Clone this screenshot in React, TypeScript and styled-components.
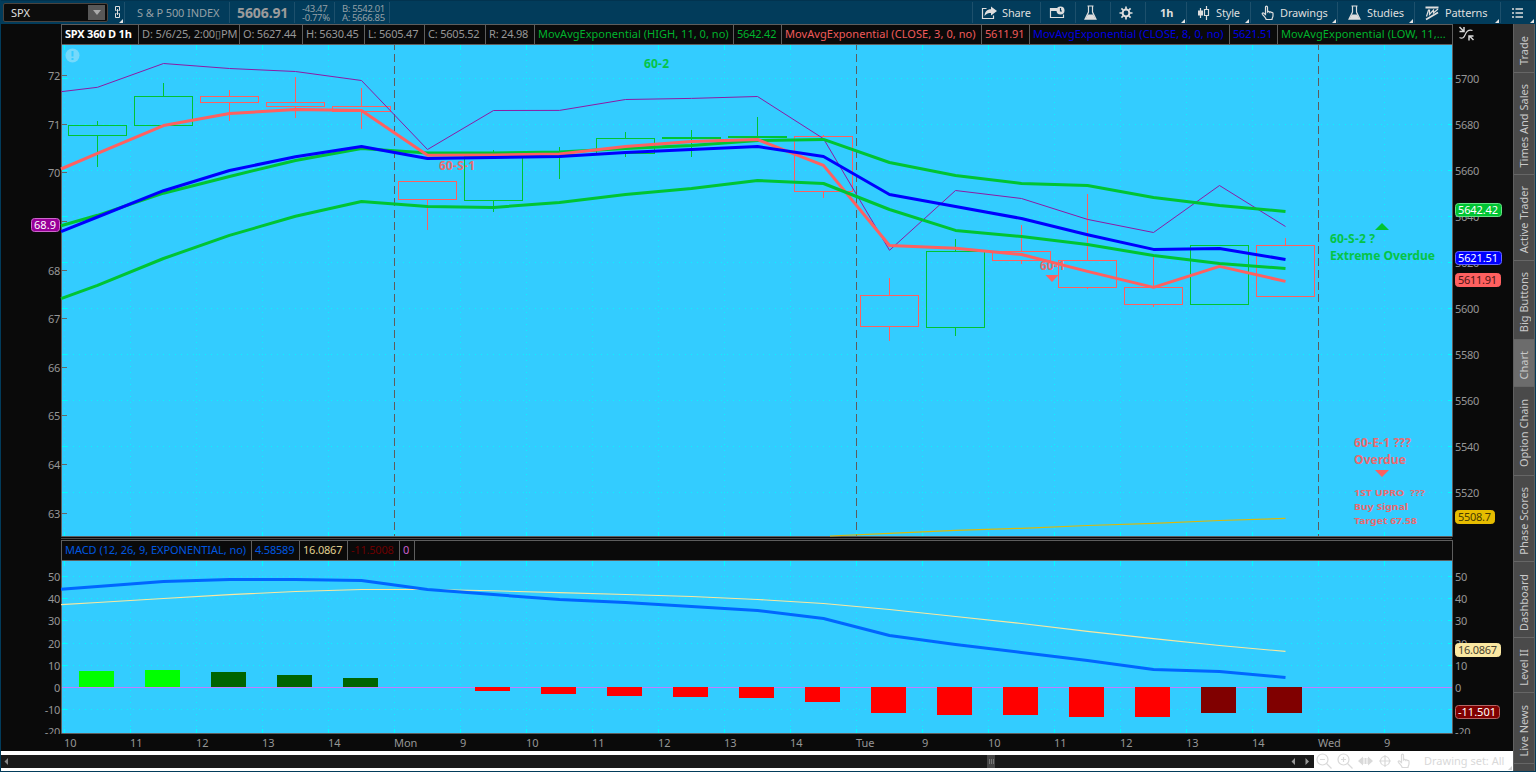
import type { ReactNode } from 'react';
import styled, { createGlobalStyle, css } from 'styled-components';

const GlobalStyle = createGlobalStyle`
  * {
    box-sizing: border-box;
  }
  body {
    margin: 0;
    overflow: hidden;
    background: #023c5b;
    font-family: 'Noto Sans', 'Open Sans', sans-serif;
    font-size: 11px;
  }
`;

const colors = {
  up: '#00c432',
  down: '#ff6060',
  blue: '#0000ff',
  purple: '#8c1ba5',
  grid: '#00ffff',
  plot: '#33ccff',
  frame: '#5e5e5e',
  label: '#969696',
  macd: '#0066ff',
  signal: '#f8e8a0',
};

/* ---------- layout ---------- */

const Window = styled.div`
  width: 1536px;
  height: 772px;
  display: flex;
  flex-direction: column;
  padding: 0 1px 1px;
  background: #023c5b;
  overflow: hidden;
`;

const Toolbar = styled.header`
  display: flex;
  flex: none;
  height: 24px;
  padding: 1px 0 1px 2px;
  border-top: 1px solid #02334f;
  color: #dedede;
`;

const SymbolBox = styled.div`
  display: flex;
  align-items: center;
  justify-content: space-between;
  width: 105px;
  height: 19px;
  margin-top: 1px;
  padding: 0 2px 0 7px;
  border: 1px solid #49433f;
  border-radius: 2px;
  background: #0c0c0c;
  color: #e0e0e0;
`;

const DropButton = styled.span`
  display: grid;
  place-items: center;
  width: 17px;
  height: 15px;
  background: #585858;
`;

const corner = css`
  position: relative;
  &::after {
    content: '';
    position: absolute;
    right: 1px;
    bottom: 0;
    border-left: 4px solid transparent;
    border-bottom: 4px solid #e4e4e4;
  }
`;

const LinkButton = styled.div`
  display: flex;
  width: 16px;
  padding: 3px 0 0 6px;
  ${corner}
`;

const QuoteCell = styled.div<{ $w: number }>`
  display: flex;
  flex-direction: column;
  justify-content: center;
  width: ${(p) => p.$w}px;
  padding-left: 7px;
  border-left: 1px solid #1d506c;
  color: #94a0a6;
  white-space: nowrap;
`;

const IndexName = styled.span`
  padding-left: 5px;
  letter-spacing: -0.1px;
`;

const LastPrice = styled.strong`
  font-size: 14px;
  line-height: 18px;
  letter-spacing: -0.1px;
  color: #9b9b9b;
`;

const SmallQuote = styled.span`
  font-size: 9.5px;
  line-height: 9px;
  letter-spacing: -0.35px;
`;

const Tools = styled.nav`
  display: flex;
  margin-left: auto;
`;

const Tool = styled.div<{ $w: number; $menu?: boolean }>`
  display: flex;
  align-items: center;
  gap: ${(p) => (p.$menu ? 6 : 5)}px;
  width: ${(p) => p.$w}px;
  padding-left: ${(p) => (p.$menu ? 10 : 8)}px;
  border-left: 1px solid #1d506c;
  white-space: nowrap;
  letter-spacing: -0.15px;
  ${(p) => p.$menu && corner}
`;

const Interval = styled.b`
  padding-left: 4px;
`;

const Body = styled.div`
  display: flex;
  flex: 1;
  min-height: 0;
`;

const ChartColumn = styled.main`
  display: flex;
  flex-direction: column;
  width: 1512px;
  background: #0a0a0a;
`;

const HeaderRow = styled.div`
  display: flex;
  height: 21px;
  padding-left: 60px;
`;

const StudyBar = styled.div`
  display: flex;
  width: 1392px;
  border: 1px solid ${colors.frame};
`;

const StudyCell = styled.div<{ $w: number; $color?: string; $bold?: boolean; $ls?: number }>`
  flex: none;
  width: ${(p) => p.$w}px;
  padding-left: 3px;
  border-right: 1px solid ${colors.frame};
  color: ${(p) => p.$color ?? '#979797'};
  font-weight: ${(p) => (p.$bold ? 700 : 400)};
  letter-spacing: ${(p) => p.$ls ?? -0.2}px;
  line-height: 18px;
  white-space: nowrap;
  overflow: hidden;
  &:last-child:nth-child(14) {
    border-right: 0;
  }
`;

const CollapseButton = styled.div`
  padding: 2px 0 0 5px;
`;

const Divider = styled.div`
  height: 3px;
  margin: 0 61px 0 60px;
  border-top: 1px solid #0a0a0a;
  border-bottom: 1px solid #0a0a0a;
  background: #484848;
`;

const Panel = styled.svg`
  display: block;
  flex: none;
  font-family: 'Noto Sans', 'Open Sans', sans-serif;
  font-size: 11px;
`;

const Footer = styled.footer`
  display: flex;
  align-items: center;
  height: 20px;
  background: #fff;
`;

const ScrollBar = styled.div`
  display: flex;
  align-items: center;
  width: 1313px;
  height: 13px;
  background: #191919;
`;

const ScrollThumb = styled.div`
  display: flex;
  align-items: center;
  justify-content: center;
  gap: 1px;
  width: 8px;
  height: 13px;
  margin: 0 296px 0 978px;
  background: #444;
`;

const Grip = styled.i`
  width: 1px;
  height: 5px;
  background: #777;
`;

const DrawingTools = styled.div`
  display: flex;
  align-items: center;
  gap: 5px;
  width: 199px;
  height: 17px;
  padding-left: 2px;
  color: #d9d9d9;
  ${corner}
  &::after {
    border-bottom-color: #d0d0d0;
  }
`;

const DrawingSet = styled.span`
  margin-left: 9px;
  line-height: 14px;
  white-space: nowrap;
`;

const SideTabs = styled.aside`
  display: flex;
  flex-direction: column;
  width: 22px;
  background: #4a4a4a;
  border-left: 1px solid #606060;
  border-right: 1px solid #606060;
`;

const SideTab = styled.div<{ $h: number; $active?: boolean }>`
  display: flex;
  align-items: center;
  justify-content: center;
  flex: none;
  height: ${(p) => p.$h}px;
  padding: 5px 2px 0 0;
  border-bottom: 1px solid #666;
  background: ${(p) => (p.$active ? '#6c6c6c' : '#4a4a4a')};
  color: #c9c9c9;
  writing-mode: vertical-rl;
  white-space: nowrap;

  > span {
    transform: rotate(180deg);
  }
`;

/* ---------- icons ---------- */

type IconProps = { w: number; h?: number; children: ReactNode };

function Icon({ w, h = 16, children }: IconProps) {
  return (
    <svg width={w} height={h} viewBox={`0 0 ${w} ${h}`} fill="none" stroke="currentColor" strokeWidth="1.2">
      {children}
    </svg>
  );
}

const ShareIcon = () => (
  <Icon w={16}>
    <path d="M5.500 3.500h-4v10h11v-3" />
    <path d="M10 1.500l6 4.500-6 4.500V8C7.500 8 5.500 8.500 3.500 11 3.800 6.500 6 4.200 10 4.200z" fill="currentColor" stroke="none" />
  </Icon>
);

const CalendarIcon = () => (
  <Icon w={16}>
    <path d="M7 3.500H1.500v9h13v-3" />
    <path d="M1 3h7v3H1z" fill="currentColor" stroke="none" />
    <circle cx="11.500" cy="5.500" r="4" fill="currentColor" stroke="none" />
    <path d="M11.500 3v3h1.500" stroke="#023c5b" />
  </Icon>
);

const FlaskIcon = () => (
  <Icon w={13}>
    <path d="M3.500 1h6M4.500 1v6L1 14.200h11L8.500 7V1" />
    <path d="M3.800 9.500h5.400l2.300 4.500h-10z" fill="currentColor" stroke="none" />
  </Icon>
);

const GearIcon = () => (
  <Icon w={14}>
    <circle cx="7" cy="8" r="3.400" strokeWidth="2" />
    <path
      d="M7 1.500v3M7 11.500v3M.5 8h3M10.500 8h3M2.400 3.400l2.100 2.100M9.500 10.500l2.100 2.100M2.400 12.600l2.100-2.100M9.500 5.500l2.100-2.100"
      strokeWidth="1.700"
    />
  </Icon>
);

const CandlesIcon = () => (
  <Icon w={13}>
    <path d="M3.500 3v10M9.500 1v14" />
    <path d="M1 5.500h5v5H1z" fill="currentColor" stroke="none" />
    <path d="M7.500 4.500h4v6h-4z" fill="#023c5b" />
  </Icon>
);

const HandIcon = () => (
  <Icon w={13}>
    <path d="M4.500 9.500V2.300c0-1.500 2-1.500 2 0v4.500c.6-.8 1.800-.6 1.900.4.600-.7 1.800-.5 1.900.4.700-.4 1.700-.1 1.700.8v2.300c0 1.500-1 2-1 3.800H5.200C4.700 12.500 2.500 11 1.400 9.200c-.6-1.100.7-1.900 1.500-1z" />
  </Icon>
);

const PatternIcon = () => (
  <Icon w={14}>
    <path d="M.5 2.500h13M1 14.500l12-7" strokeWidth="1.800" />
    <path d="M1.500 11.500l2-6.500h1v4.500L8.500 5v3L13 4" />
  </Icon>
);

const ListIcon = () => (
  <Icon w={12}>
    <path d="M1 4h2M4.500 4H12M1 8h2M4.500 8H12M1 12h2M4.500 12H12" strokeWidth="1.500" />
  </Icon>
);

const ChainIcon = () => (
  <Icon w={8} h={14}>
    <path d="M2.500 5.500H1.500v-4h4v4h-1M2.500 8.500h-1v4h4v-4h-1M3.500 4v6" strokeWidth="1" />
  </Icon>
);

const CollapseIcon = () => (
  <svg width="17" height="16" viewBox="0 0 17 16" fill="none" stroke="#d8d8d8">
    <path d="M1.500 1l4 4M6 1v4.500H1.500M15.500 14l-4-4M11 14.500V10h4.500" strokeWidth="1.500" />
    <path d="M1.500 11.500c3 1.500 4.500 0 5.500-2.500S10 3 14.500 4.500" strokeWidth="1.200" />
  </svg>
);

const MagnifierIcon = ({ plus }: { plus?: boolean }) => (
  <Icon w={16}>
    <circle cx="6.500" cy="6.500" r="5.500" />
    <path d="M4 6.500h5M10.500 10.500l5 5" />
    {plus && <path d="M6.500 4v5" />}
  </Icon>
);

const StretchIcon = () => (
  <Icon w={15}>
    <path d="M0 8l5-4.500v9zM15 8l-5-4.500v9z" fill="currentColor" stroke="none" />
    <path d="M6 5v6M7.500 5v6M9 5v6" strokeWidth="1" />
  </Icon>
);

const CrosshairIcon = () => (
  <Icon w={14}>
    <circle cx="7" cy="8" r="4.500" />
    <path d="M7 2v12M1 8h12" />
  </Icon>
);

/* ---------- chart data ---------- */

const FIRST_BAR = 97.5;
const BAR_STEP = 66;
const barX = (i: number) => FIRST_BAR + i * BAR_STEP;

type Candle = { up?: boolean; top: number; bottom: number; high?: number; low?: number };

const candles: Candle[] = [
  { up: true, top: 125, bottom: 135, high: 121, low: 167 },
  { up: true, top: 96, bottom: 125, high: 83 },
  { top: 96, bottom: 102, high: 90, low: 121 },
  { top: 102, bottom: 106, high: 77, low: 118 },
  { top: 106, bottom: 111, high: 88, low: 129 },
  { top: 181, bottom: 199, low: 230 },
  { up: true, top: 156, bottom: 200, high: 150, low: 212 },
  { up: true, top: 154, bottom: 155, high: 147, low: 179 },
  { up: true, top: 138, bottom: 153, high: 132, low: 157 },
  { up: true, top: 137, bottom: 138, high: 130, low: 157 },
  { up: true, top: 136, bottom: 137, high: 117 },
  { top: 136, bottom: 191, high: 135, low: 198 },
  { top: 295, bottom: 326, high: 278, low: 341 },
  { up: true, top: 251, bottom: 327, high: 239, low: 336 },
  { top: 251, bottom: 260, high: 225, low: 264 },
  { top: 260, bottom: 287, high: 194, low: 289 },
  { top: 287, bottom: 304, high: 255, low: 307 },
  { up: true, top: 245, bottom: 304 },
  { top: 245, bottom: 296, high: 238 },
];

// The first value of every series sits on the left edge of the plot.
const upro = [91.7, 87.3, 63.5, 68.5, 71.5, 80.5, 149.5, 110.5, 110.4, 99.5, 98.4, 96.5, 138.7, 250.3, 190.5, 198.5, 219.4, 232.5, 185.5, 226.5];
const emaHigh = [225.7, 215.3, 193.2, 176.5, 160.5, 148.5, 153, 153, 152, 148.5, 145.4, 140.5, 139.4, 162.5, 175.5, 183.4, 185.4, 197.5, 205.5, 211.4];
const emaClose3 = [169, 153.4, 125.6, 113.5, 109.6, 110.5, 155.3, 155, 154, 146.6, 141.5, 139.5, 165.4, 245.5, 248.2, 254.5, 271.4, 287.4, 266.4, 281.4];
const emaClose8 = [231.7, 217, 190.7, 170.5, 156.7, 146.6, 158.4, 157.4, 156.4, 152.5, 149.5, 146.6, 156.5, 194.5, 206.5, 218.5, 234.7, 249.4, 248.6, 259.4];
const emaLow = [298.7, 285.4, 258.5, 235.4, 216.3, 201.5, 206.5, 207.4, 202.4, 194.5, 188.5, 180.5, 183.5, 209.5, 230.4, 236.5, 244.6, 255.5, 263.5, 268.4];
const macdLine = [589.2, 586.5, 581.5, 579.5, 579.5, 580.4, 589.5, 594.6, 599.5, 602.6, 606.5, 610.4, 618.5, 635.5, 644.4, 652.4, 660.5, 669.5, 671.5, 677.5];
const signalLine = [604.6, 602.5, 598.5, 594.6, 591.5, 589.5, 589.5, 590.8, 592.6, 594.5, 596.5, 599.5, 603.5, 609.5, 616.5, 623.5, 631.4, 638.6, 645.5, 651.4];

const histogram: [number, number, string][] = [
  [0, 671, '#00ff00'],
  [1, 670, '#00ff00'],
  [2, 672, '#006400'],
  [3, 675, '#006400'],
  [4, 678, '#006400'],
  [6, 691, '#ff0000'],
  [7, 694, '#ff0000'],
  [8, 696, '#ff0000'],
  [9, 697, '#ff0000'],
  [10, 698, '#ff0000'],
  [11, 702, '#ff0000'],
  [12, 713, '#ff0000'],
  [13, 715, '#ff0000'],
  [14, 715, '#ff0000'],
  [15, 717, '#ff0000'],
  [16, 717, '#ff0000'],
  [17, 713, '#800000'],
  [18, 713, '#800000'],
];

const columns = Array.from({ length: 21 }, (_, i) => 64 + i * BAR_STEP);
const sessionLines = [394, 856, 1318];
const timeLabels = ['10', '11', '12', '13', '14', 'Mon', '9', '10', '11', '12', '13', '14', 'Tue', '9', '10', '11', '12', '13', '14', 'Wed', '9'];

const priceTicks = Array.from({ length: 10 }, (_, i) => ({ y: 78 + i * 46, label: 5700 - i * 20 }));
const leftTicks: [number, string][] = [
  [75, '72'], [124, '71'], [172, '70'], [221, ''], [270, '68'],
  [318, '67'], [367, '66'], [415, '65'], [464, '64'], [513, '63'],
];
const macdTicks: [number, string][] = [
  [576, '50'], [598, '40'], [620, '30'], [643, '20'], [665, '10'], [687, '0'], [709, '-10'], [731, '-20'],
];

const linePoints = (values: number[]) =>
  values.map((y, i) => `${i === 0 ? 61 : barX(i - 1)},${y}`).join(' ');

function Line({ values, color, width = 3 }: { values: number[]; color: string; width?: number }) {
  return <polyline points={linePoints(values)} fill="none" stroke={color} strokeWidth={width} strokeLinejoin="round" />;
}

function Grid({ top, bottom, rows }: { top: number; bottom: number; rows: number[] }) {
  return (
    <g stroke={colors.grid} shapeRendering="crispEdges">
      {rows.map((y) => (
        <g key={y}>
          <path d={`M67 ${y + 0.5}H1447`} strokeDasharray="1 5" opacity="0.75" />
          <path d={`M62 ${y + 0.5}h5M1448 ${y + 0.5}h4`} />
        </g>
      ))}
      {columns.map((x) => (
        <g key={x}>
          <path d={`M${x + 0.5} ${top + 9}V${bottom - 5}`} strokeDasharray="1 5" opacity="0.75" />
          <path d={`M${x + 0.5} ${top}v5M${x + 0.5} ${bottom - 4}v4`} />
        </g>
      ))}
    </g>
  );
}

type BadgeProps = { x?: number; y: number; w: number; fill: string; border: string; color: string; label: string };

function Badge({ x = 1455, y, w, fill, border, color, label }: BadgeProps) {
  return (
    <g>
      <rect x={x + 0.5} y={y + 0.5} width={w - 1} height={13} rx={3} fill={fill} stroke={border} />
      <text x={x + 3} y={y + 11} fill={color} textLength={w - 7}>{label}</text>
    </g>
  );
}

function PricePanel() {
  return (
    <Panel width={1512} height={492} viewBox="1 45 1512 492">
      <rect x={61} y={45} width={1391} height={491} fill={colors.plot} />
      <Grid top={45} bottom={536} rows={priceTicks.map((t) => t.y)} />
      <path d="M61.500 45V536.500H1452.500V45" fill="none" stroke={colors.frame} />

      {sessionLines.map((x) => (
        <path key={x} d={`M${x + 0.5} 42V536`} stroke="#5c5c5c" strokeDasharray="8 4" shapeRendering="crispEdges" />
      ))}
      {leftTicks.map(([y, label]) => (
        <g key={y}>
          <path d={`M62 ${y + 0.5}h5`} stroke="#666" />
          <text x={60} y={y + 5} fill={colors.label} textAnchor="end" letterSpacing="-0.3">{label}</text>
        </g>
      ))}
      {priceTicks.map((t) => (
        <text key={t.y} x={1455} y={t.y + 5} fill={colors.label} letterSpacing="-0.3">{t.label}</text>
      ))}

      <circle cx={72.5} cy={55.5} r={7} fill="#75d9fb" />
      <path d="M72.500 51v5.500M72.500 58v2" stroke={colors.plot} strokeWidth="2" />

      <g fontWeight={700} fontSize={12} opacity={0.9}>
        <g fill={colors.up}>
          <text x={644} y={68} textLength={25}>60-2</text>
          <text x={1330} y={243} textLength={45}>60-S-2 ?</text>
          <text x={1330} y={260} textLength={105} lengthAdjust="spacingAndGlyphs">Extreme Overdue</text>
        </g>
        <g fill={colors.down}>
          <text x={439} y={170} textLength={36}>60-S-1</text>
          <text x={1040} y={270} textLength={25}>60-1</text>
          <text x={1354} y={447} textLength={57}>60-E-1 ???</text>
          <text x={1354} y={464} textLength={52} lengthAdjust="spacingAndGlyphs">Overdue</text>
          <g fontSize={9.3}>
            <text x={1354} y={496} textLength={71} lengthAdjust="spacingAndGlyphs" xmlSpace="preserve">1ST UPRO  ???</text>
            <text x={1354} y={510} textLength={54} lengthAdjust="spacingAndGlyphs">Buy Signal</text>
            <text x={1354} y={524} textLength={63} lengthAdjust="spacingAndGlyphs">Target 67.58</text>
          </g>
        </g>
      </g>
      <path d="M1375 230h14l-7-7z" fill={colors.up} />
      <path d="M1375 470h14l-7 7zM1045.500 275h13l-6.500 7z" fill={colors.down} />

      {candles.map((c, i) => {
        const x = barX(i);
        const wicks =
          (c.high ? `M${x} ${c.high}V${c.top}` : '') + (c.low ? `M${x} ${c.bottom + 1}V${c.low}` : '');
        return (
          <g key={i} fill="none" stroke={c.up ? colors.up : colors.down} shapeRendering="crispEdges">
            <rect x={x - 29} y={c.top + 0.5} width={58} height={c.bottom - c.top} />
            {wicks && <path d={wicks} />}
          </g>
        );
      })}

      <Line values={upro} color={colors.purple} width={1} />
      <Line values={emaHigh} color={colors.up} />
      <Line values={emaClose3} color={colors.down} />
      <Line values={emaLow} color={colors.up} />
      <Line values={emaClose8} color={colors.blue} />
      <polyline
        points="830,536 889.500,533.300 955.500,530.400 1021.500,528.300 1087.500,525.500 1153.500,523.400 1219.500,520.500 1285.500,518.400"
        fill="none"
        stroke="#d9b90c"
        strokeWidth="1.200"
      />

      <Badge x={31} y={218} w={29} fill="#990099" border="#cc66cc" color="#fff" label="68.9" />
      <Badge y={203} w={47} fill="#00c432" border="#66e085" color="#fff" label="5642.42" />
      <Badge y={251} w={47} fill="#0000ff" border="#6666ff" color="#fff" label="5621.51" />
      <Badge y={273} w={46} fill="#ff6060" border="#ff6060" color="#4c1414" label="5611.91" />
      <Badge y={510} w={40} fill="#e6bc00" border="#e6bc00" color="#4a3c00" label="5508.7" />
    </Panel>
  );
}

function MacdPanel() {
  return (
    <Panel width={1512} height={173} viewBox="1 561 1512 173">
      <rect x={61} y={561} width={1391} height={172} fill={colors.plot} />
      <Grid top={561} bottom={733} rows={macdTicks.map(([y]) => y).filter((y) => y !== 687 && y !== 731)} />
      <path d="M61.500 561V733.500H1452.500V561" fill="none" stroke={colors.frame} />
      {macdTicks.map(([y, label]) => (
        <g key={y} fill={colors.label} letterSpacing="-0.3">
          <text x={60} y={y + 5} textAnchor="end">{label}</text>
          <text x={1455} y={y + 5}>{label}</text>
        </g>
      ))}
      <path d="M62 687.500H1452" stroke="#c57bff" />
      {histogram.map(([i, y, fill]) => (
        <rect key={i} x={barX(i) - 18.5} y={Math.min(y, 687)} width={35} height={Math.abs(y - 687)} fill={fill} />
      ))}
      <Line values={signalLine} color={colors.signal} width={1.1} />
      <Line values={macdLine} color={colors.macd} />
      <Badge y={643} w={46} fill="#fbe8a2" border="#fbe8a2" color="#4a4430" label="16.0867" />
      <Badge y={705} w={45} fill="#800000" border="#b36666" color="#fff" label="-11.501" />
    </Panel>
  );
}

function TimeAxis() {
  return (
    <Panel width={1512} height={17} viewBox="1 734 1512 17">
      {columns.map((x, i) => (
        <text key={x} x={x} y={747} fill={colors.label} letterSpacing="-0.1">{timeLabels[i]}</text>
      ))}
    </Panel>
  );
}

const sideTabs: [string, number][] = [
  ['Trade', 49],
  ['Times And Sales', 102],
  ['Active Trader', 86],
  ['Big Buttons', 79],
  ['Chart', 47],
  ['Option Chain', 89],
  ['Phase Scores', 86],
  ['Dashboard', 76],
  ['Level II', 55],
  ['Live News', 71],
];

function App() {
  return (
    <Window>
      <GlobalStyle />
      <Toolbar>
        <SymbolBox>
          SPX
          <DropButton>
            <svg width="8" height="5" viewBox="0 0 8 5"><path d="M0 0h8L4 5z" fill="#aaa" /></svg>
          </DropButton>
        </SymbolBox>
        <LinkButton><ChainIcon /></LinkButton>
        <QuoteCell $w={105}><IndexName>S &amp; P 500 INDEX</IndexName></QuoteCell>
        <QuoteCell $w={65}><LastPrice>5606.91</LastPrice></QuoteCell>
        <QuoteCell $w={40}>
          <SmallQuote>-43.47</SmallQuote>
          <SmallQuote>-0.77%</SmallQuote>
        </QuoteCell>
        <QuoteCell $w={55}>
          <SmallQuote>B: 5542.01</SmallQuote>
          <SmallQuote>A: 5666.85</SmallQuote>
        </QuoteCell>
        <QuoteCell $w={1} />
        <Tools>
          <Tool $w={68}><ShareIcon />Share</Tool>
          <Tool $w={35}><CalendarIcon /></Tool>
          <Tool $w={35}><FlaskIcon /></Tool>
          <Tool $w={35}><GearIcon /></Tool>
          <Tool $w={41} $menu><Interval>1h</Interval></Tool>
          <Tool $w={64} $menu><CandlesIcon />Style</Tool>
          <Tool $w={87} $menu><HandIcon />Drawings</Tool>
          <Tool $w={77} $menu><FlaskIcon />Studies</Tool>
          <Tool $w={86} $menu><PatternIcon />Patterns</Tool>
          <Tool $w={35} $menu><ListIcon /></Tool>
        </Tools>
      </Toolbar>
      <Body>
        <ChartColumn>
          <HeaderRow>
            <StudyBar>
              <StudyCell $w={77} $color="#fff" $bold>SPX 360 D 1h</StudyCell>
              <StudyCell $w={101} $ls={-0.12}>D: 5/6/25, 2:00▯PM</StudyCell>
              <StudyCell $w={63}>O: 5627.44</StudyCell>
              <StudyCell $w={62}>H: 5630.45</StudyCell>
              <StudyCell $w={60}>L: 5605.47</StudyCell>
              <StudyCell $w={61}>C: 5605.52</StudyCell>
              <StudyCell $w={49}>R: 24.98</StudyCell>
              <StudyCell $w={199} $color="#00b22d" $ls={0.03}>MovAvgExponential (HIGH, 11, 0, no)</StudyCell>
              <StudyCell $w={48} $color="#00b22d">5642.42</StudyCell>
              <StudyCell $w={200} $color="#f05a5a" $ls={0.06}>MovAvgExponential (CLOSE, 3, 0, no)</StudyCell>
              <StudyCell $w={48} $color="#f05a5a">5611.91</StudyCell>
              <StudyCell $w={200} $color="#0000e0" $ls={0.06}>MovAvgExponential (CLOSE, 8, 0, no)</StudyCell>
              <StudyCell $w={48} $color="#0000e0">5621.51</StudyCell>
              <StudyCell $w={173} $color="#00b22d" $ls={0.08}>MovAvgExponential (LOW, 11,...</StudyCell>
            </StudyBar>
            <CollapseButton><CollapseIcon /></CollapseButton>
          </HeaderRow>
          <PricePanel />
          <Divider />
          <HeaderRow>
            <StudyBar>
              <StudyCell $w={190} $color="#0058e0" $ls={-0.05}>MACD (12, 26, 9, EXPONENTIAL, no)</StudyCell>
              <StudyCell $w={48} $color="#0058e0">4.58589</StudyCell>
              <StudyCell $w={48} $color="#e0d090">16.0867</StudyCell>
              <StudyCell $w={52} $color="#6c0000">-11.5008</StudyCell>
              <StudyCell $w={15} $color="#c860d0">0</StudyCell>
            </StudyBar>
          </HeaderRow>
          <MacdPanel />
          <TimeAxis />
          <Footer>
            <ScrollBar>
              <svg width="8" height="7" viewBox="0 0 8 7"><path d="M7 0v7L3.500 3.500z" fill="#888" /></svg>
              <ScrollThumb><Grip /><Grip /><Grip /></ScrollThumb>
              <svg width="20" height="7" viewBox="0 0 20 7"><path d="M4 0v7L.5 3.500zM14.500 0v7l3.500-3.500z" fill="#999" /></svg>
            </ScrollBar>
            <DrawingTools>
              <MagnifierIcon />
              <MagnifierIcon plus />
              <StretchIcon />
              <CrosshairIcon />
              <HandIcon />
              <DrawingSet>Drawing set: All</DrawingSet>
            </DrawingTools>
          </Footer>
        </ChartColumn>
        <SideTabs>
          {sideTabs.map(([label, height]) => (
            <SideTab key={label} $h={height} $active={label === 'Chart'}><span>{label}</span></SideTab>
          ))}
        </SideTabs>
      </Body>
    </Window>
  );
}

export default App;
